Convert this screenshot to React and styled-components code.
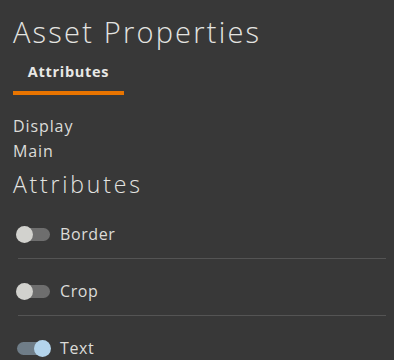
import React, { useState } from "react";
import styled, { createGlobalStyle } from "styled-components";

const GlobalStyle = createGlobalStyle`
  html, body {
    margin: 0;
    padding: 0;
    background: #383838;
    font-family: "Open Sans", Lato, sans-serif;
    color: #e6e6e3;
  }
`;

const Wrapper = styled.div`
  padding: 13px 8px 0 13px;
  display: flex;
  flex-direction: column;
`;

const Title = styled.h1`
  margin: 0;
  font-size: 29px;
  line-height: 37px;
  font-weight: 300;
  letter-spacing: 2.2px;
  color: #e4e4e1;
`;

const Tabs = styled.div`
  display: flex;
  margin-top: 8px;
`;

const Tab = styled.div`
  width: 111px;
  height: 37px;
  display: flex;
  align-items: center;
  justify-content: center;
  box-sizing: border-box;
  padding-bottom: 7px;
  font-size: 14.5px;
  font-weight: 700;
  letter-spacing: 0.7px;
  color: #e8e8e6;
  border-bottom: 4px solid ${(props) => (props.active ? "#e87400" : "transparent")};
`;

const Field = styled.div`
  display: flex;
  flex-direction: column;
  margin-top: 19px;
`;

const Label = styled.span`
  font-size: 16px;
  line-height: 25px;
  letter-spacing: 0.9px;
  color: #dcdcd9;
`;

const SubTitle = styled.h2`
  margin: 5px 0 0;
  font-size: 23px;
  line-height: 30px;
  font-weight: 300;
  letter-spacing: 2.8px;
  color: #e4e4e1;
`;

const List = styled.div`
  display: flex;
  flex-direction: column;
  margin-top: 2px;
`;

const Row = styled.div`
  display: flex;
  align-items: center;
  gap: 10px;
  box-sizing: border-box;
  height: 57px;
  padding-top: 8px;
  padding-left: 0;
  border-top: 1px solid ${(props) => (props.first ? "transparent" : "#545454")};
  margin-left: 5px;
`;

const Track = styled.button`
  position: relative;
  flex: none;
  width: 33px;
  height: 13px;
  margin-left: -1px;
  border: none;
  padding: 0;
  border-radius: 7px;
  cursor: pointer;
  background: ${(props) => (props.on ? "#6f7d88" : "#6e6e6e")};
`;

const Thumb = styled.span`
  position: absolute;
  top: -2px;
  left: ${(props) => (props.on ? "17px" : "-1px")};
  width: 17px;
  height: 17px;
  border-radius: 50%;
  background: ${(props) => (props.on ? "#b3d4ec" : "#d2d2ce")};
`;

const ItemText = styled.span`
  font-size: 16px;
  letter-spacing: 0.6px;
  color: #dcdcd9;
`;

const App = () => {
  const [items, setItems] = useState([
    { name: "Border", on: false },
    { name: "Crop", on: false },
    { name: "Text", on: true },
  ]);

  const toggle = (i) => {
    setItems((state) => state.map((it, j) => (j === i ? { ...it, on: !it.on } : it)));
  };

  return (
    <>
      <GlobalStyle />
      <Wrapper>
        <Title>Asset Properties</Title>
        <Tabs>
          <Tab active>Attributes</Tab>
        </Tabs>
        <Field>
          <Label>Display</Label>
          <Label>Main</Label>
        </Field>
        <SubTitle>Attributes</SubTitle>
        <List>
          {items.map((it, i) => (
            <Row key={it.name} first={i === 0}>
              <Track on={it.on} onClick={() => toggle(i)}>
                <Thumb on={it.on} />
              </Track>
              <ItemText>{it.name}</ItemText>
            </Row>
          ))}
        </List>
      </Wrapper>
    </>
  );
};

export default App;
